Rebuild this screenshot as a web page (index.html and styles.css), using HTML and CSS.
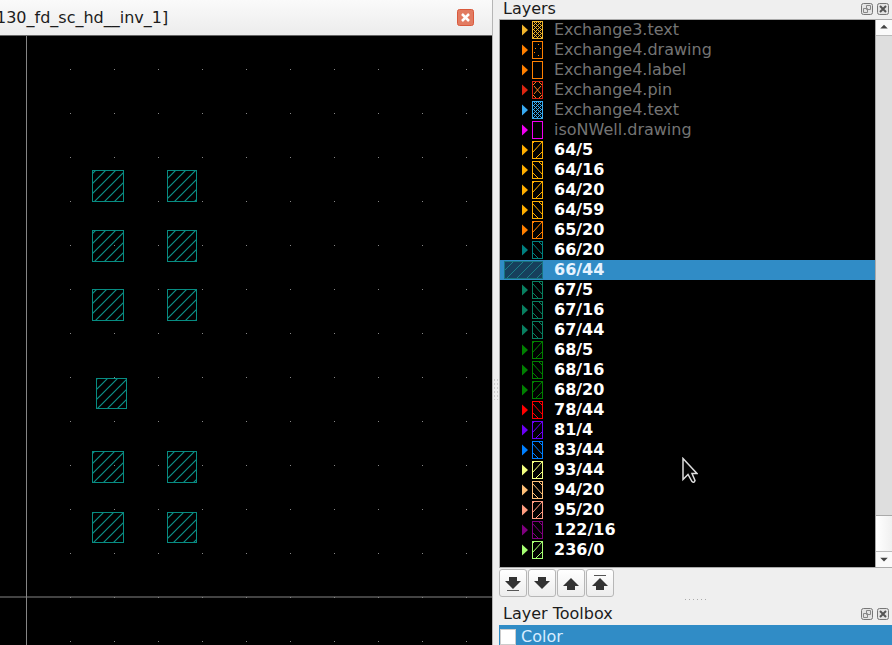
FILE: index.html
```
<!DOCTYPE html>
<html lang="en">
<head>
<meta charset="utf-8">
<title>Layout viewer</title>
<link rel="stylesheet" href="styles.css">
</head>
<body>
<svg class="defs" aria-hidden="true">
  <defs>
    <symbol id="frame" viewBox="0 0 24 20"><path d="M1 4.5v11l6-5.5z" fill="currentColor"/><rect x="11.5" y="1.5" width="10" height="17" fill="none" stroke="currentColor"/></symbol>
    <symbol id="up" viewBox="0 0 24 20"><use href="#frame"/><path d="M12 12l9-10M15 18l6-6M12 3l1-1" fill="none" stroke="currentColor"/></symbol>
    <symbol id="down" viewBox="0 0 24 20"><use href="#frame"/><path d="M12 4l9 10M12 13l5 5M18 2l3 3" fill="none" stroke="currentColor"/></symbol>
    <symbol id="dots" viewBox="0 0 24 20"><use href="#frame"/><path d="M17 4h1v1h-1zM14 8h1v1h-1zM19 8h1v1h-1zM13 12h1v1h-1zM17 15h1v1h-1z" fill="currentColor"/></symbol>
    <symbol id="cross" viewBox="0 0 24 20"><use href="#frame"/><path d="M13 6l7 8M20 6l-7 8M12 5l3-3M18 2l3 3M12 15l3 3M18 18l3-3" fill="none" stroke="#f57a1c"/></symbol>
    <symbol id="dense" viewBox="0 0 24 20"><use href="#frame"/><path d="M12 6l4-4M12 10l8-8M12 14l9-9M12 18l9-9M16 18l5-5M17 2l4 4M13 2l8 8M12 5l9 9M12 9l9 9M12 13l5 5" fill="none" stroke="currentColor"/></symbol>
    <symbol id="float" viewBox="0 0 12 12"><rect x=".5" y=".5" width="11" height="11" rx="2" fill="#e4e4e4" stroke="#777"/><path d="M5.5 2.5h4v4h-4zM2.500 5.500h4v4h-4z" fill="#e4e4e4" stroke="#888"/></symbol>
    <symbol id="close" viewBox="0 0 12 12"><rect x=".5" y=".5" width="11" height="11" rx="2" fill="#e4e4e4" stroke="#777"/><path d="M3 3l6 6M9 3l-6 6" stroke="#555" stroke-width="2"/></symbol>
    <symbol id="arrow" viewBox="0 0 18 18"><path d="M5 3h8v4h4l-8 8-8-8h4z" fill="#333"/></symbol>
  </defs>
</svg>
<div class="app">
  <main class="view">
    <header class="view-title">
      <h1>130_fd_sc_hd__inv_1]</h1>
      <button class="view-close" aria-label="Close view"><svg viewBox="0 0 17 17"><rect x=".5" y=".5" width="16" height="16" rx="2" fill="#e27b61" stroke="#d9593c"/><path d="M5 5l7 7M12 5l-7 7" stroke="#fff" stroke-width="2.500"/></svg></button>
    </header>
    <svg class="canvas" role="img" aria-label="Cell layout">
      <defs>
        <pattern id="grid" x="70" y="33" width="44" height="44" patternUnits="userSpaceOnUse"><rect width="1" height="1" fill="#888"/></pattern>
        <pattern id="hatch" width="10" height="10" patternUnits="userSpaceOnUse"><path d="M-1 1L1-1M-1 11L11-1M9 11l2-2" stroke="#0a9188" stroke-width="1.200" fill="none"/></pattern>
      </defs>
      <rect x="30" width="100%" height="100%" fill="url(#grid)"/>
      <g class="vias">
        <rect x="92.500" y="134.500" width="31" height="31"/><rect x="167.500" y="134.500" width="29" height="31"/>
        <rect x="92.500" y="194.500" width="31" height="31"/><rect x="167.500" y="194.500" width="29" height="31"/>
        <rect x="92.500" y="253.500" width="31" height="31"/><rect x="167.500" y="253.500" width="29" height="31"/>
        <rect x="96.500" y="342.500" width="30" height="30"/>
        <rect x="92.500" y="415.500" width="31" height="31"/><rect x="167.500" y="415.500" width="29" height="31"/>
        <rect x="92.500" y="476.500" width="31" height="30"/><rect x="167.500" y="476.500" width="29" height="30"/>
      </g>
      <path d="M26.500 0v2000M0 561h4000" stroke="#858585"/>
    </svg>
  </main>
  <div class="splitter" aria-hidden="true"></div>
  <aside class="docks">
    <section class="layers">
      <header class="dock-title"><h2>Layers</h2>
        <button aria-label="Float layers"><svg><use href="#float"/></svg></button><button aria-label="Close layers"><svg><use href="#close"/></svg></button>
      </header>
      <div class="list-box">
        <ul class="list">
          <li class="off gold"><svg><use href="#dense"/></svg><span>Exchange3.text</span></li>
          <li class="off orange"><svg><use href="#dots"/></svg><span>Exchange4.drawing</span></li>
          <li class="off orange"><svg><use href="#frame"/></svg><span>Exchange4.label</span></li>
          <li class="off brick"><svg><use href="#cross"/></svg><span>Exchange4.pin</span></li>
          <li class="off sky"><svg><use href="#dense"/></svg><span>Exchange4.text</span></li>
          <li class="off magenta"><svg><use href="#frame"/></svg><span>isoNWell.drawing</span></li>
          <li class="amber"><svg><use href="#up"/></svg><span>64/5</span></li>
          <li class="amber"><svg><use href="#down"/></svg><span>64/16</span></li>
          <li class="amber"><svg><use href="#up"/></svg><span>64/20</span></li>
          <li class="amber"><svg><use href="#down"/></svg><span>64/59</span></li>
          <li class="orange"><svg><use href="#up"/></svg><span>65/20</span></li>
          <li class="teal"><svg><use href="#down"/></svg><span>66/20</span></li>
          <li class="selected"><svg class="wide" viewBox="0 0 40 20"><rect x=".5" y="1.500" width="38" height="17" fill="#173f5c" stroke="#17747f"/><path d="M1 10l8-8M3 18L19 2M13 18L29 2M23 18L38 3M33 18l5-5" stroke="#1a7f88" fill="none"/></svg><span>66/44</span></li>
          <li class="jade"><svg><use href="#down"/></svg><span>67/5</span></li>
          <li class="jade"><svg><use href="#down"/></svg><span>67/16</span></li>
          <li class="jade"><svg><use href="#down"/></svg><span>67/44</span></li>
          <li class="green"><svg><use href="#up"/></svg><span>68/5</span></li>
          <li class="green"><svg><use href="#down"/></svg><span>68/16</span></li>
          <li class="green"><svg><use href="#up"/></svg><span>68/20</span></li>
          <li class="red"><svg><use href="#down"/></svg><span>78/44</span></li>
          <li class="violet"><svg><use href="#up"/></svg><span>81/4</span></li>
          <li class="blue"><svg><use href="#down"/></svg><span>83/44</span></li>
          <li class="yellow"><svg><use href="#up"/></svg><span>93/44</span></li>
          <li class="peach"><svg><use href="#down"/></svg><span>94/20</span></li>
          <li class="salmon"><svg><use href="#up"/></svg><span>95/20</span></li>
          <li class="purple"><svg><use href="#down"/></svg><span>122/16</span></li>
          <li class="lime"><svg><use href="#up"/></svg><span>236/0</span></li>
        </ul>
        <div class="scrollbar">
          <button aria-label="Scroll up"><svg viewBox="0 0 16 16"><path d="M4 9l4-4 4 4z" fill="#444"/></svg></button>
          <div class="track"><div class="thumb"></div></div>
          <button aria-label="Scroll down"><svg viewBox="0 0 16 16"><path d="M4 6l4 4 4-4z" fill="#444"/></svg></button>
        </div>
      </div>
      <div class="tools">
        <button aria-label="Move to bottom"><svg viewBox="0 0 18 18"><use href="#arrow" width="18" height="18"/><path d="M3 16.500h12" stroke="#555"/></svg></button>
        <button aria-label="Move down"><svg viewBox="0 0 18 18"><use href="#arrow" width="18" height="18"/></svg></button>
        <button aria-label="Move up"><svg viewBox="0 0 18 18"><path d="M5 16h8v-4h4L9 4l-8 8h4z" fill="#333"/></svg></button>
        <button aria-label="Move to top"><svg viewBox="0 0 18 18"><path d="M5 16h8v-4h4L9 4l-8 8h4z" fill="#333"/><path d="M3 1.500h12" stroke="#555"/></svg></button>
      </div>
    </section>
    <div class="grip" aria-hidden="true"></div>
    <section class="toolbox">
      <header class="dock-title"><h2>Layer Toolbox</h2>
        <button aria-label="Float toolbox"><svg><use href="#float"/></svg></button><button aria-label="Close toolbox"><svg><use href="#close"/></svg></button>
      </header>
      <label class="color-row"><input type="checkbox"><span>Color</span></label>
    </section>
  </aside>
</div>
<svg class="pointer" viewBox="0 0 16 28" aria-hidden="true"><path d="M1 1.500v21l5-5 4 7q2 2 3-1l-3-7h5z" fill="#050505" stroke="#ddd" stroke-width="1.500"/></svg>
</body>
</html>
```
FILE: styles.css
```
* { box-sizing: border-box; }
body {
  margin: 0;
  background: #efefef;
  color: #1c1c1c;
  font: 16px/20px "DejaVu Sans", sans-serif;
  overflow: hidden;
}
h1, h2 { margin: 0; font-size: 16px; font-weight: 400; }
button { padding: 0; border: 0; background: none; display: flex; align-items: center; justify-content: center; }
svg { display: block; }
.defs { position: absolute; width: 0; height: 0; }
.app { display: flex; height: 100vh; }

.view { flex: 1; min-width: 0; display: flex; flex-direction: column; border-right: 1px solid #b5b5b5; }
.view-title {
  flex: none;
  height: 36px;
  display: flex;
  align-items: center;
  justify-content: space-between;
  padding-right: 18px;
  border-bottom: 1px solid #666;
  background: linear-gradient(#fafafa, #ececec);
}
.view-title h1 { margin-left: -4px; white-space: nowrap; }
.view-close svg { width: 17px; height: 17px; }
.canvas { flex: 1; min-height: 0; width: 100%; background: #000; }
.vias rect { fill: url(#hatch); stroke: #078c82; }

.splitter { width: 6px; display: flex; align-items: center; }
.splitter::before {
  content: "";
  width: 6px;
  height: 22px;
  margin-top: 132px;
  background: radial-gradient(circle, #ccc 1px, transparent 1px) 0 0 / 3px 4px;
}
.docks { width: 393px; display: flex; flex-direction: column; }
.dock-title { display: flex; align-items: center; gap: 4px; height: 19px; padding: 0 3px 2px 4px; }
.dock-title h2 { flex: 1; }
.dock-title svg { width: 12px; height: 12px; }

.list-box { display: flex; border: solid #aaa; border-width: 1px 0 1px 1px; }
.list { flex: 1; margin: 0; padding: 0 0 7px; list-style: none; background: #000; font-weight: 700; }
.list li { display: flex; height: 20px; padding-left: 21px; gap: 9px; }
.list svg { width: 24px; height: 20px; }
.list span { color: #fff; }
.list .off { font-weight: 400; }
.list .off span { color: #747474; }
.list .selected { background: #308cc6; padding-left: 4px; gap: 10px; }
.list .selected span { color: #e6f3ff; }
.list .wide { width: 40px; }
.gold { color: #f3b52c; }
.orange { color: #ff8000; }
.brick { color: #dc2611; }
.sky { color: #38aaf1; }
.magenta { color: #f000f0; }
.amber { color: #ffae00; }
.teal { color: #008080; }
.jade { color: #087f60; }
.green { color: #008000; }
.red { color: #ff0000; }
.violet { color: #6b00f5; }
.blue { color: #0080ff; }
.yellow { color: #f4ff80; }
.peach { color: #ffc078; }
.salmon { color: #ff9d80; }
.purple { color: #800080; }
.lime { color: #a6ff73; }

.scrollbar { width: 17px; display: flex; flex-direction: column; border-left: 1px solid #aaa; background: #fafafa; }
.scrollbar button { height: 15px; }
.scrollbar svg { width: 16px; height: 15px; }
.track { flex: 1; display: flex; flex-direction: column; justify-content: flex-end; background: #dedede; border: solid #bbb; border-width: 1px 0; }
.thumb { height: 36px; background: linear-gradient(90deg, #fff, #f0f0f0); border-top: 1px solid #aaa; }

.tools { display: flex; gap: 1px; padding-top: 1px; }
.tools button { width: 28px; height: 28px; border: 1px solid #b7b7b7; border-radius: 3px; background: linear-gradient(#fff, #ededed); }
.tools svg { width: 18px; height: 18px; }
.grip { flex: none; height: 6px; width: 21px; margin: 0 auto; background: repeating-linear-gradient(90deg, #aaa 0 1px, transparent 1px 4px) 0 2px / 100% 1px no-repeat; }
.toolbox .dock-title { height: 22px; padding-bottom: 1px; }
.color-row { display: flex; align-items: center; gap: 5px; height: 24px; padding-left: 1px; background: #308cc6; color: #d8edff; }
.color-row input { appearance: none; margin: 0; width: 16px; height: 16px; background: #fff; border: 1px solid #ccc; }

.pointer { position: absolute; left: 682px; top: 457px; width: 16px; height: 28px; }
```
